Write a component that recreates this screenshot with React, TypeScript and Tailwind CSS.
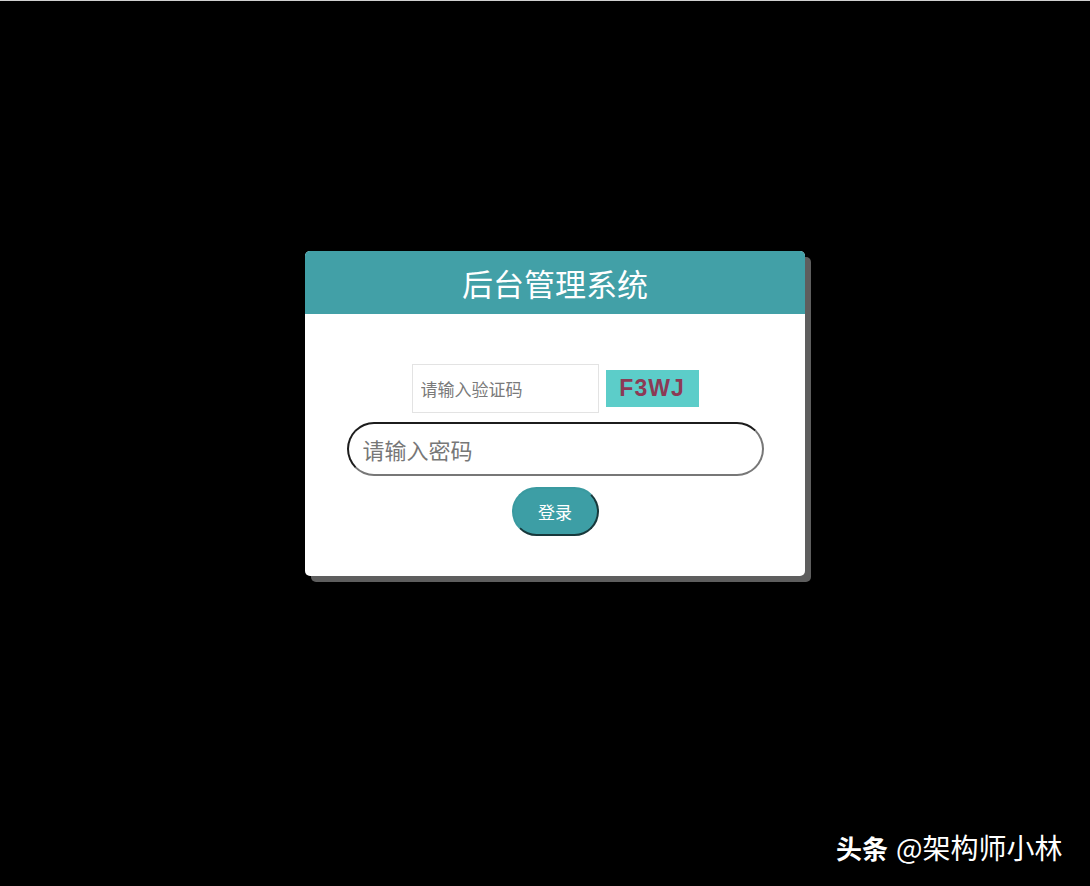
import React from "react"

const font = { fontFamily: '"Noto Sans CJK SC", "Noto Sans", sans-serif' }

export default function App() {
  return (
    <div className="relative h-[886px] w-full overflow-hidden border-t border-[#d0d0d0] bg-black" style={font}>
      <div className="pl-[305px] pt-[250px]">
        {/* login card */}
        <div className="w-[500px] h-[325px] rounded-[5px] bg-white shadow-[6px_6px_0_0_#5e5e5e] overflow-hidden">
          <div className="flex h-[63px] items-center justify-center bg-[#42a0a7]">
            <h1 className="text-[31px] leading-none text-white">后台管理系统</h1>
          </div>

          <div className="flex flex-col items-center pt-[50px]">
            <div className="flex items-center gap-[7px]">
              <input
                placeholder="请输入验证码"
                className="h-[49px] w-[187px] border border-[#e3e3e3] px-[8px] text-[17px] text-[#333] placeholder:text-[#7a7a7a] outline-none"
              />
              <div className="flex h-[37px] w-[93px] items-center justify-center bg-[#5ccdc9]">
                <span
                  className="text-[23px] font-bold tracking-[1px] text-[#8c3a55]"
                  style={{ fontFamily: '"Liberation Sans", Arial, sans-serif' }}
                >
                  F3WJ
                </span>
              </div>
            </div>

            <input
              placeholder="请输入密码"
              className="mt-[9px] h-[54px] w-[417px] rounded-full border-2 border-t-[#1c1c1c] border-l-[#1c1c1c] border-r-[#777] border-b-[#777] px-[14px] text-[22px] placeholder:text-[#777] outline-none"
            />

            <button className="mt-[11px] h-[49px] w-[87px] rounded-full border-2 border-t-[#3a9aa0] border-l-[#3a9aa0] border-r-[#17383b] border-b-[#17383b] bg-[#3d9ea5] text-[17px] text-white">
              登录
            </button>
          </div>
        </div>
      </div>

      {/* watermark */}
      <div className="absolute left-[836px] top-[825px] flex items-center text-white">
        <span className="text-[26px] font-bold">头条</span>
        <span className="ml-[8px] text-[28px]">@架构师小林</span>
      </div>
    </div>
  )
}
